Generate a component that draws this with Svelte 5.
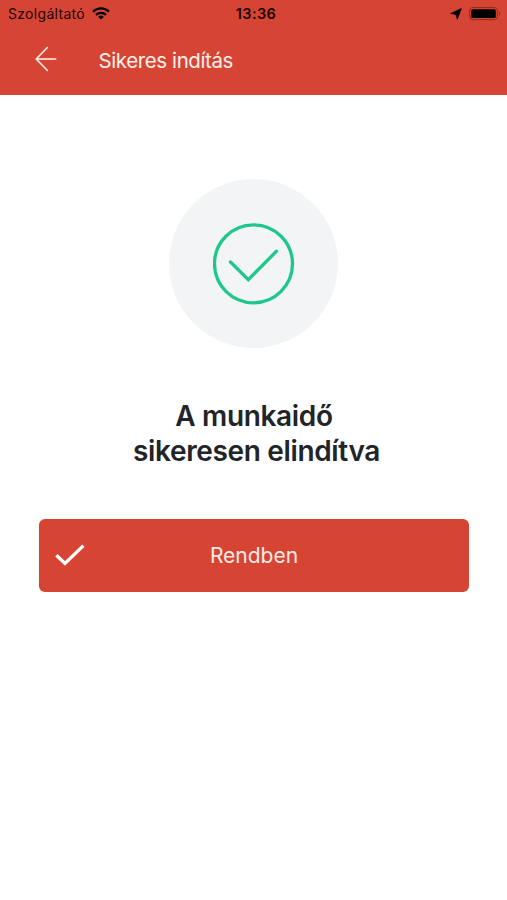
<script lang="ts">
	export let carrier = 'Szolgáltató'
	export let time = '13:36'
	export let title = 'Sikeres indítás'

	// one entry per line of the message
	export let message = ['A munkaidő', 'sikeresen elindítva']
</script>

<div class="screen">
	<header>
		<div class="status">
			<div class="carrier">
				<span>{carrier}</span>
				<svg width="18" height="13" viewBox="0 0 18 13" fill="none" stroke="#000" stroke-width="2.3">
					<path d="M1 4.6a11.4 11.4 0 0 1 16 0" />
					<path d="M4 7.9a7.2 7.2 0 0 1 10 0" />
					<path d="M9 12.6 6.2 9.9a4 4 0 0 1 5.6 0z" fill="#000" stroke="none" />
				</svg>
			</div>
			<time>{time}</time>
			<div class="indicators">
				<svg width="12" height="12" viewBox="0 0 12 12">
					<path d="M11.3.6 7.3 11.2 6 6.4.8 5.5z" stroke="#000" stroke-width=".8" stroke-linejoin="round" />
				</svg>
				<svg width="32" height="14" viewBox="0 0 32 14">
					<rect x=".6" y=".6" width="27.8" height="12" rx="3" fill="none" stroke="#8f2a1e" />
					<rect x="2.2" y="2.2" width="24.6" height="8.8" rx="1.5" />
					<path d="M30 4.6c1.6.6 1.6 3.4 0 4z" fill="#8f2a1e" />
				</svg>
			</div>
		</div>

		<nav>
			<button class="back" aria-label="Vissza">
				<svg width="22" height="26" viewBox="0 0 22 26" fill="none" stroke="#fff3ef" stroke-width="1.5" stroke-linecap="round">
					<path d="M12.4 1.5 1.2 13l11.2 11.5M1.2 13h19.6" />
				</svg>
			</button>
			<h1>{title}</h1>
		</nav>
	</header>

	<main>
		<div class="badge">
			<svg width="82" height="82" viewBox="0 0 82 82" fill="none" stroke="#1fc78d" stroke-width="3.3" stroke-linecap="round">
				<circle cx="40.5" cy="40.8" r="39" />
				<path d="M17.5 39 35.3 56.7 63.5 28.2" />
			</svg>
		</div>

		<h2>
			{#each message as line}
				<span>{line}</span>
			{/each}
		</h2>

		<button class="confirm">
			<svg width="30" height="22" viewBox="0 0 30 22" fill="none" stroke="#fff" stroke-width="3.3">
				<path d="M1.4 11.2 10 19.4 28.4 1.6" />
			</svg>
			<span>Rendben</span>
		</button>
	</main>
</div>

<style>
	:global(body) {
		background: #fff;
	}

	.screen {
		min-height: 900px;
		font-family: Inter, 'Liberation Sans', sans-serif;
	}

	svg {
		display: block;
	}

	button {
		padding: 0;
		border: 0;
		background: none;
		font: inherit;
	}

	header {
		height: 95px;
		background: #d64534;
	}

	.status {
		height: 27px;
		padding: 0 6px 0 8px;
		display: grid;
		grid-template-columns: 1fr auto 1fr;
		align-items: center;
		font-size: 14px;
		color: #1c0301;
	}

	.carrier {
		display: flex;
		align-items: center;
		gap: 7px;
		letter-spacing: 0.3px;
	}

	time {
		margin-left: 3px;
		font-weight: 600;
		font-size: 14.5px;
		letter-spacing: 0.4px;
	}

	.indicators {
		display: flex;
		justify-content: flex-end;
		align-items: center;
		gap: 7px;
	}

	nav {
		height: 64px;
		padding-left: 35px;
		display: flex;
		align-items: center;
	}

	h1 {
		margin: 3px 0 0 41.5px;
		font-size: 20.5px;
		font-weight: 400;
		letter-spacing: -0.4px;
		color: #fff0ec;
	}

	main {
		padding: 84px 38px 0 39px;
		display: flex;
		flex-direction: column;
		align-items: center;
	}

	.badge {
		width: 169px;
		height: 169px;
		margin-right: 1px;
		display: grid;
		place-content: center;
		border-radius: 50%;
		background: #f2f4f6;
	}

	h2 {
		margin: 51px 0 50px;
		font-size: 28px;
		font-weight: 600;
		line-height: 35px;
		letter-spacing: -0.35px;
		text-align: center;
		color: #212428;
	}

	h2 span {
		display: block;
	}

	/* the second line sits a little right of centre */
	h2 span + span {
		padding-left: 5px;
	}

	.confirm {
		width: 100%;
		height: 73px;
		padding: 0 16px;
		display: grid;
		grid-template-columns: 30px 1fr 30px;
		align-items: center;
		border-radius: 6px;
		background: #d64534;
		color: #ffeae5;
		font-size: 21px;
	}

	.confirm svg {
		margin-top: -1px;
	}
</style>
